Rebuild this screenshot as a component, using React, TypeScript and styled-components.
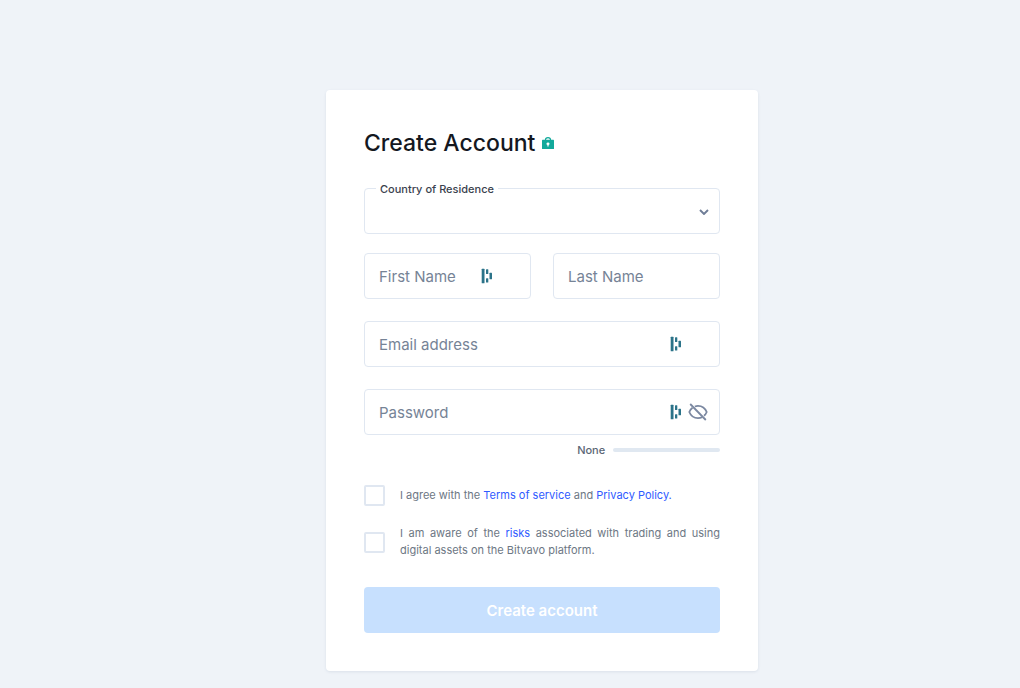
import React, { useState } from "react";
import styled, { createGlobalStyle } from "styled-components";

const GlobalStyle = createGlobalStyle`
  * { box-sizing: border-box; }
  body {
    margin: 0;
    background: #eff3f8;
    font-family: Inter, "Liberation Sans", sans-serif;
    color: #14181f;
  }
`;

const Page = styled.main`
  display: flex;
  justify-content: center;
  padding: 90px 0 17px 64px;
`;

const Card = styled.form`
  width: 100%;
  max-width: 432px;
  padding: 38px;
  background: #ffffff;
  border-radius: 4px;
  box-shadow: 0 1px 3px rgba(40, 70, 110, 0.1);
`;

const Header = styled.header`
  display: flex;
  align-items: center;
  gap: 7px;
  margin-bottom: 30px;
`;

const Title = styled.h1`
  margin: 0;
  font-size: 23px;
  line-height: 30px;
  font-weight: 500;
`;

const Field = styled.div`
  position: relative;
  display: flex;
  min-width: 0;
`;

const FloatingLabel = styled.label`
  position: absolute;
  top: -8px;
  left: 12px;
  padding: 0 4px;
  background: #ffffff;
  font-size: 11px;
  line-height: 18px;
  font-weight: 500;
  color: #3a424e;
`;

const Select = styled.select`
  appearance: none;
  width: 100%;
  height: 46px;
  padding: 0 40px 0 14px;
  border: 1px solid #e0e7f1;
  border-radius: 4px;
  background: #ffffff;
  font: inherit;
  font-size: 15px;
`;

const Input = styled.input`
  width: 100%;
  min-width: 0;
  height: 46px;
  padding: 0 14px;
  border: 1px solid #e0e7f1;
  border-radius: 4px;
  background: #ffffff;
  font: inherit;
  font-size: 15px;
  color: #14181f;

  &::placeholder {
    color: #768396;
    opacity: 1;
  }
`;

const Adornments = styled.div<{ $end: number }>`
  position: absolute;
  top: 0;
  bottom: 0;
  right: ${(p) => p.$end}px;
  display: flex;
  align-items: center;
  gap: 6px;
  pointer-events: none;
`;

const IconButton = styled.button`
  display: flex;
  padding: 0;
  border: 0;
  background: none;
  cursor: pointer;
  pointer-events: auto;
`;

const Fields = styled.div`
  display: grid;
  grid-template-columns: 1fr 1fr;
  gap: 22px;
  margin-top: 19px;
`;

const WideField = styled(Field)`
  grid-column: 1 / -1;
`;

const Strength = styled.div`
  display: flex;
  justify-content: flex-end;
  align-items: center;
  gap: 8px;
  margin: 7px 0 27px;
  font-size: 11px;
  line-height: 16px;
  font-weight: 500;
  color: #5b6675;
`;

const StrengthTrack = styled.span`
  width: 30%;
  height: 4px;
  border-radius: 2px;
  background: #e0e8f1;
`;

const Consents = styled.div`
  display: grid;
  gap: 19px;
  margin-bottom: 28px;
`;

const Consent = styled.div`
  display: flex;
  align-items: center;
  gap: 15px;
`;

const Checkbox = styled.input`
  appearance: none;
  flex: none;
  width: 21px;
  height: 21px;
  margin: 0;
  border: 2px solid #e0e7f1;
  border-radius: 2px;
  background: #ffffff;

  &:checked {
    background: #2f5bff;
  }
`;

const ConsentText = styled.label`
  flex: 1;
  font-size: 11px;
  line-height: 17px;
  text-align: justify;
  color: #6d7784;
`;

const Link = styled.a`
  color: #2f5bff;
  text-decoration: none;
`;

const Submit = styled.button`
  display: block;
  width: 100%;
  height: 46px;
  border: 0;
  border-radius: 4px;
  background: #c7e0fe;
  color: #ffffff;
  font: inherit;
  font-size: 15px;
  font-weight: 600;
`;

const LockIcon = () => (
  <svg width="12" height="12" viewBox="0 0 12 12" aria-hidden="true">
    <path d="M3.5 4V2.800a2.500 2.200 0 0 1 5 0V4" fill="none" stroke="#12a99b" strokeWidth="1.200" />
    <rect y="2.800" width="12" height="9.200" rx="0.600" fill="#12a99b" />
    <path d="M6 5.400a1.500 1.400 0 0 1 .6 2.700v1.500H5.400V8.100A1.500 1.400 0 0 1 6 5.400Z" fill="#ffffff" />
  </svg>
);

const ManagerIcon = () => (
  <svg width="12" height="16" viewBox="0 0 12 16" aria-hidden="true" fill="#2b7389">
    <rect x="0.700" y="0.700" width="2.800" height="14.600" rx="0.500" />
    <rect x="5" y="1.200" width="2.300" height="4.800" rx="0.500" />
    <rect x="5" y="10.200" width="2.300" height="4.400" rx="0.500" />
    <rect x="8.500" y="4.700" width="2.500" height="6.600" rx="0.500" />
  </svg>
);

const ChevronIcon = () => (
  <svg width="10" height="8" viewBox="0 0 10 8" aria-hidden="true">
    <path d="M1 3l4 4 4-4" fill="none" stroke="#6f7d97" strokeWidth="1.900" />
  </svg>
);

const EyeOffIcon = () => (
  <svg width="20" height="18" viewBox="0 0 20 18" aria-hidden="true" fill="none" stroke="#7b88a1" strokeWidth="1.800">
    <path d="M6.800 3.500C8 3 9 2.800 10 2.800c4 0 7.200 2.400 8.700 6.200-.6 1.500-1.500 2.800-2.700 3.800" />
    <path d="M4.500 4.800C3.100 5.800 2 7.200 1.300 9 2.800 12.700 6 15.200 10 15.200c1.500 0 2.900-.3 4.100-.9" />
    <path d="M2.200 1L17.800 17" />
  </svg>
);

export default function App() {
  const [visible, setVisible] = useState(false);

  return (
    <>
      <GlobalStyle />
      <Page>
        <Card onSubmit={(e) => e.preventDefault()}>
          <Header>
            <Title>Create Account</Title>
            <LockIcon />
          </Header>

          <Field>
            <Select id="country" defaultValue="">
              <option value="" />
            </Select>
            <FloatingLabel htmlFor="country">Country of Residence</FloatingLabel>
            <Adornments $end={11}>
              <ChevronIcon />
            </Adornments>
          </Field>

          <Fields>
            <Field>
              <Input type="text" placeholder="First Name" aria-label="First Name" />
              <Adornments $end={38}>
                <ManagerIcon />
              </Adornments>
            </Field>
            <Field>
              <Input type="text" placeholder="Last Name" aria-label="Last Name" />
            </Field>
            <WideField>
              <Input type="email" placeholder="Email address" aria-label="Email address" />
              <Adornments $end={38}>
                <ManagerIcon />
              </Adornments>
            </WideField>
            <WideField>
              <Input type={visible ? "text" : "password"} placeholder="Password" aria-label="Password" />
              <Adornments $end={12}>
                <ManagerIcon />
                <IconButton type="button" aria-label="Toggle password visibility" onClick={() => setVisible(!visible)}>
                  <EyeOffIcon />
                </IconButton>
              </Adornments>
            </WideField>
          </Fields>

          <Strength>
            None
            <StrengthTrack />
          </Strength>

          <Consents>
            <Consent>
              <Checkbox type="checkbox" id="terms" />
              <ConsentText htmlFor="terms">
                I agree with the <Link href="#terms">Terms of service</Link> and{" "}
                <Link href="#privacy">Privacy Policy.</Link>
              </ConsentText>
            </Consent>
            <Consent>
              <Checkbox type="checkbox" id="risks" />
              <ConsentText htmlFor="risks">
                I am aware of the <Link href="#risks">risks</Link> associated with trading and using digital assets
                on the Bitvavo platform.
              </ConsentText>
            </Consent>
          </Consents>

          <Submit type="submit">Create account</Submit>
        </Card>
      </Page>
    </>
  );
}
